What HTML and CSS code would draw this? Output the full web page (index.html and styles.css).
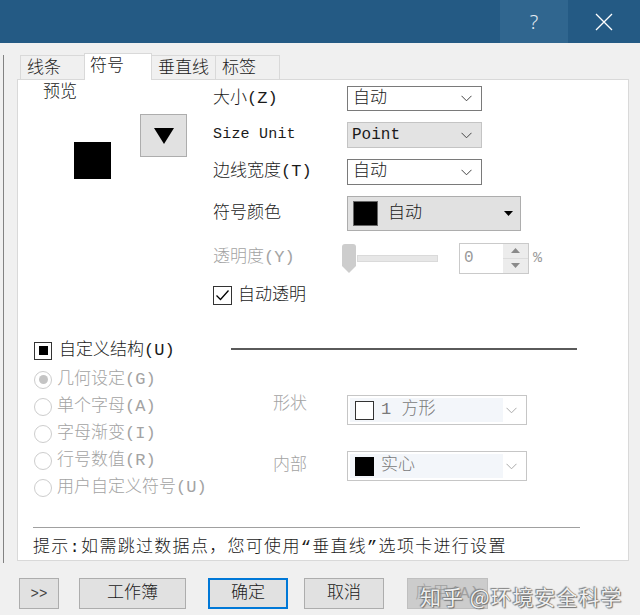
FILE: index.html
```html
<!DOCTYPE html>
<html lang="zh-CN">
<head>
<meta charset="utf-8">
<title>Plot Details</title>
<link rel="stylesheet" href="styles.css">
</head>
<body>
<div class="titlebar">
  <div class="tb-btn tb-help">?</div>
  <div class="tb-btn tb-close">
    <svg width="18" height="18" viewBox="0 0 18 18"><path d="M1 1L17 17M17 1L1 17" stroke="#fff" stroke-width="1.3" fill="none"/></svg>
  </div>
</div>

<div class="workarea">
  <div class="sidepane"></div>
  <div class="dialog">
    <div class="tabs">
      <div class="tab">线条</div>
      <div class="tab tab-active">符号</div>
      <div class="tab">垂直线</div>
      <div class="tab">标签</div>
    </div>
    <div class="panel">
      <div class="top">
        <div class="preview">
          <div class="preview-label">预览</div>
          <div class="preview-body">
            <div class="preview-square"></div>
            <div class="arrow-btn">
              <svg width="22" height="18" viewBox="0 0 22 18"><path d="M1 1H21L11 17Z" fill="#000"/></svg>
            </div>
          </div>
        </div>
        <div class="form">
          <div class="lbl">大小(Z)</div>
          <div class="combo">
            <span>自动</span>
            <svg class="chev" width="11" height="7" viewBox="0 0 11 7"><path d="M0.5 0.8L5.5 5.8L10.5 0.8" stroke="#444" fill="none"/></svg>
          </div>

          <div class="lbl lbl-en">Size Unit</div>
          <div class="combo combo-gray">
            <span class="en">Point</span>
            <svg class="chev" width="11" height="7" viewBox="0 0 11 7"><path d="M0.5 0.8L5.5 5.8L10.5 0.8" stroke="#444" fill="none"/></svg>
          </div>

          <div class="lbl">边线宽度(T)</div>
          <div class="combo">
            <span>自动</span>
            <svg class="chev" width="11" height="7" viewBox="0 0 11 7"><path d="M0.5 0.8L5.5 5.8L10.5 0.8" stroke="#444" fill="none"/></svg>
          </div>

          <div class="lbl">符号颜色</div>
          <div class="colorbox">
            <span class="swatch"></span>
            <span class="colorbox-text">自动</span>
            <svg class="colorbox-tri" width="9" height="5" viewBox="0 0 9 5"><path d="M0 0H9L4.5 5Z" fill="#000"/></svg>
          </div>

          <div class="lbl lbl-dis">透明度(Y)</div>
          <div class="trans">
            <div class="slider">
              <svg class="thumb" width="16" height="31" viewBox="0 0 16 31"><path d="M1 4Q1 1 4 1H12Q15 1 15 4V23L8 30L1 23Z" fill="#cdcdcd"/></svg>
              <div class="track"></div>
            </div>
            <div class="spin">
              <span class="spin-val">0</span>
              <div class="spin-btns">
                <div class="spin-b"><svg width="9" height="5" viewBox="0 0 9 5"><path d="M0 5H9L4.5 0Z" fill="#8a8a8a"/></svg></div>
                <div class="spin-b"><svg width="9" height="5" viewBox="0 0 9 5"><path d="M0 0H9L4.5 5Z" fill="#8a8a8a"/></svg></div>
              </div>
            </div>
            <span class="pct">%</span>
          </div>

          <div class="check-row">
            <span class="check">
              <svg width="15" height="13" viewBox="0 0 15 13"><path d="M1.5 6.5L5.5 10.5L13.5 1.5" stroke="#000" stroke-width="1.3" fill="none"/></svg>
            </span>
            <span class="check-text">自动透明</span>
          </div>
        </div>
      </div>

      <div class="custom-head">
        <span class="tri-check"><span class="tri-fill"></span></span>
        <span class="custom-title">自定义结构(U)</span>
        <span class="hr-dark"></span>
      </div>

      <div class="custom-body">
        <div class="radios">
          <div class="radio"><span class="rb rb-on"></span><span>几何设定(G)</span></div>
          <div class="radio"><span class="rb"></span><span>单个字母(A)</span></div>
          <div class="radio"><span class="rb"></span><span>字母渐变(I)</span></div>
          <div class="radio"><span class="rb"></span><span>行号数值(R)</span></div>
          <div class="radio"><span class="rb"></span><span>用户自定义符号(U)</span></div>
        </div>
        <div class="shape-grid">
          <div class="lbl lbl-dis lbl-up">形状</div>
          <div class="combo2">
            <span class="combo2-in"><span class="sq sq-white"></span><span>1 方形</span></span>
            <svg class="chev" width="11" height="7" viewBox="0 0 11 7"><path d="M0.5 0.8L5.5 5.8L10.5 0.8" stroke="#aaa" fill="none"/></svg>
          </div>
          <div class="lbl lbl-dis">内部</div>
          <div class="combo2">
            <span class="combo2-in"><span class="sq sq-black"></span><span>实心</span></span>
            <svg class="chev" width="11" height="7" viewBox="0 0 11 7"><path d="M0.5 0.8L5.5 5.8L10.5 0.8" stroke="#aaa" fill="none"/></svg>
          </div>
        </div>
      </div>

      <div class="sep"></div>
      <div class="hint">提示:如需跳过数据点，您可使用“垂直线”选项卡进行设置</div>
    </div>
  </div>
</div>

<div class="buttons">
  <div class="btn btn-more">&gt;&gt;</div>
  <div class="btn btn-wb">工作簿</div>
  <div class="btn btn-ok">确定</div>
  <div class="btn btn-cancel">取消</div>
  <div class="btn btn-apply">应用(A)</div>
</div>

<div class="watermark">知乎 @环境安全科学</div>
</body>
</html>
```

FILE: styles.css
```css
html, body {
  margin: 0;
  padding: 0;
}
body {
  position: relative;
  width: 640px;
  height: 615px;
  overflow: hidden;
  background: #f0f0f0;
  font-family: "Liberation Mono", "Noto Sans CJK SC", monospace;
  font-size: 17px;
  font-weight: 300;
  color: #1a1a1a;
}

/* title bar */
.titlebar {
  height: 43px;
  background: #245a84;
  display: flex;
  justify-content: flex-end;
}
.tb-btn {
  height: 43px;
  display: flex;
  align-items: center;
  justify-content: center;
  color: #e4ebf2;
}
.tb-help {
  width: 68px;
  background: #30668f;
  font-family: "Noto Sans", sans-serif;
  font-weight: 300;
  font-size: 20px;
}
.tb-close {
  width: 72px;
}

/* work area */
.workarea {
  display: flex;
  margin-top: 12px;
  height: 508px;
}
.sidepane {
  width: 3px;
  height: 508px;
  border-right: 1px solid #828282;
}
.dialog {
  margin-left: 13px;
  width: 612px;
}

/* tabs */
.tabs {
  display: flex;
  align-items: flex-end;
  height: 24px;
  padding-left: 3px;
}
.tab {
  box-sizing: border-box;
  width: 65px;
  height: 24px;
  border: 1px solid #d9d9d9;
  border-bottom: none;
  margin-right: -1px;
  padding-left: 6px;
  padding-top: 2px;
  line-height: 22px;
  background: #f0f0f0;
}
.tab-active {
  position: relative;
  z-index: 1;
  width: 68px;
  height: 27px;
  margin-bottom: -1px;
  background: #fff;
  padding-left: 5px;
  padding-top: 1px;
  line-height: 24px;
}

/* panel */
.panel {
  box-sizing: border-box;
  height: 482px;
  border: 1px solid #d9d9d9;
  background: #fff;
}
.top {
  display: flex;
  height: 226px;
}
.preview {
  width: 195px;
}
.preview-label {
  margin-left: 25px;
  margin-top: 3px;
  line-height: 20px;
}
.preview-body {
  display: flex;
  align-items: flex-start;
  padding-left: 56px;
}
.preview-square {
  width: 37px;
  height: 37px;
  background: #000;
  margin-top: 39px;
}
.arrow-btn {
  box-sizing: border-box;
  width: 47px;
  height: 43px;
  margin-left: 29px;
  margin-top: 11px;
  background: #e1e1e1;
  border: 1px solid #adadad;
  display: flex;
  align-items: center;
  justify-content: center;
}

.form {
  margin-top: 6px;
  display: grid;
  grid-template-columns: 134px auto;
  grid-template-rows: 25px 26px 26px 35px 32px 21px;
  row-gap: 11px;
  align-content: start;
}
.lbl {
  display: flex;
  align-items: center;
  line-height: 20px;
  white-space: nowrap;
}
.lbl-en {
  font-size: 15px;
  letter-spacing: 0.2px;
}
.lbl-dis {
  color: #a3a3a3;
}
.combo {
  box-sizing: border-box;
  width: 135px;
  border: 1px solid #7a7a7a;
  background: #fff;
  display: flex;
  align-items: center;
  justify-content: space-between;
  padding: 0 9px 0 5px;
  line-height: 20px;
}
.combo-gray {
  background: #e3e3e3;
  border-color: #c4c4c4;
  padding-left: 4px;
}
.en {
  font-size: 16px;
}
.chev {
  display: block;
}
.colorbox {
  box-sizing: border-box;
  width: 174px;
  border: 1px solid #adadad;
  background: #e1e1e1;
  display: flex;
  align-items: center;
  padding: 0 7px 0 5px;
}
.swatch {
  box-sizing: border-box;
  width: 25px;
  height: 25px;
  background: #000;
  border: 1px solid #666;
}
.colorbox-text {
  margin-left: 10px;
  line-height: 20px;
}
.colorbox-tri {
  margin-left: auto;
}

.trans {
  display: flex;
  align-items: center;
  margin-left: -6px;
}
.slider {
  display: flex;
  align-items: center;
}
.thumb {
  display: block;
}
.track {
  box-sizing: border-box;
  width: 81px;
  height: 7px;
  background: #e7e7e7;
  border: 1px solid #dadada;
}
.spin {
  box-sizing: border-box;
  margin-left: 21px;
  width: 70px;
  height: 31px;
  border: 1px solid #cacaca;
  display: flex;
}
.spin-val {
  flex: 1;
  padding-left: 4px;
  color: #9a9a9a;
  font-size: 16px;
  line-height: 28px;
}
.spin-btns {
  width: 25px;
  background: #ececec;
  display: flex;
  flex-direction: column;
}
.spin-b {
  flex: 1;
  display: flex;
  align-items: center;
  justify-content: center;
}
.spin-b + .spin-b {
  border-top: 1px solid #dcdcdc;
}
.pct {
  margin-left: 4px;
  color: #9a9a9a;
  font-size: 15px;
}

.check-row {
  grid-column: 1 / -1;
  display: flex;
  align-items: center;
}
.check {
  box-sizing: border-box;
  width: 19px;
  height: 19px;
  border: 1px solid #333;
  display: flex;
  align-items: center;
  justify-content: center;
}
.check-text {
  margin-left: 6px;
  line-height: 20px;
}

/* custom structure */
.custom-head {
  display: flex;
  align-items: center;
  margin-top: 35px;
  margin-left: 16px;
  height: 19px;
}
.tri-check {
  box-sizing: border-box;
  width: 18px;
  height: 18px;
  border: 1px solid #333;
  display: flex;
  align-items: center;
  justify-content: center;
}
.tri-fill {
  width: 9px;
  height: 9px;
  background: #000;
}
.custom-title {
  margin-left: 7px;
  line-height: 20px;
}
.hr-dark {
  width: 346px;
  height: 2px;
  background: #5a5a5a;
  margin-left: auto;
  margin-right: 51px;
  margin-top: -3px;
}
.custom-body {
  display: flex;
  margin-top: 6px;
  margin-left: 16px;
}
.radios {
  width: 239px;
}
.radio {
  height: 27px;
  display: flex;
  align-items: center;
  color: #a3a3a3;
  line-height: 20px;
}
.rb {
  box-sizing: border-box;
  width: 18px;
  height: 18px;
  border-radius: 50%;
  border: 1px solid #cdcdcd;
  margin-right: 5px;
  display: flex;
  align-items: center;
  justify-content: center;
}
.rb-on::after {
  content: "";
  width: 9px;
  height: 9px;
  border-radius: 50%;
  background: #c4c4c4;
}
.shape-grid {
  margin-top: 29px;
  display: grid;
  grid-template-columns: 74px 180px;
  grid-template-rows: 30px 30px;
  row-gap: 26px;
  align-content: start;
}
.lbl-up {
  margin-top: -10px;
}
.combo2 {
  box-sizing: border-box;
  border: 1px solid #c6c6c6;
  background: #fff;
  display: flex;
  align-items: center;
  padding: 2px 9px 2px 2px;
}
.combo2-in {
  width: 148px;
  align-self: stretch;
  background: #f3f6fa;
  display: flex;
  align-items: center;
  padding-left: 5px;
  color: #7a7a7a;
  line-height: 20px;
  margin-right: auto;
}
.sq {
  box-sizing: border-box;
  width: 19px;
  height: 19px;
  margin-right: 7px;
}
.sq-white {
  border: 1px solid #333;
  background: #fff;
}
.sq-black {
  background: #000;
}

.sep {
  margin-top: 26px;
  margin-left: 15px;
  width: 547px;
  height: 1px;
  background: #a0a0a0;
}
.hint {
  margin-top: 10px;
  margin-left: 15px;
  line-height: 20px;
  letter-spacing: 1.3px;
  white-space: nowrap;
}

/* bottom buttons */
.buttons {
  display: flex;
  margin-top: 15px;
  padding-left: 19px;
}
.btn {
  box-sizing: border-box;
  height: 31px;
  background: #e1e1e1;
  border: 1px solid #adadad;
  display: flex;
  align-items: center;
  justify-content: center;
  line-height: 20px;
}
.btn-more {
  width: 40px;
  font-size: 14px;
  color: #444;
}
.btn-wb {
  width: 107px;
  margin-left: 20px;
}
.btn-ok {
  width: 80px;
  margin-left: 22px;
  border: 2px solid #0078d7;
}
.btn-cancel {
  width: 80px;
  margin-left: 16px;
}
.btn-apply {
  width: 81px;
  margin-left: 23px;
  background: #cccccc;
  border-color: #bfbfbf;
  color: #a0a0a0;
}

.watermark {
  position: absolute;
  left: 420px;
  top: 581px;
  font-family: "Noto Sans CJK SC", sans-serif;
  font-size: 21px;
  font-weight: 400;
  letter-spacing: 1px;
  color: rgba(255, 255, 255, 0.92);
  text-shadow: 0 0 1px #555, 1px 1px 1px #777, -1px -1px 1px #888;
  white-space: nowrap;
}
```
